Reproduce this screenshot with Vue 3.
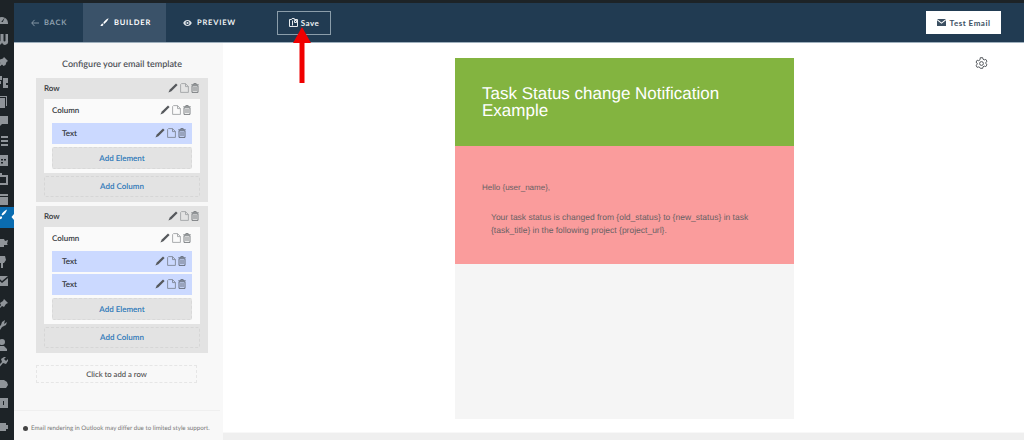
<script setup>
const icons = [
  { y: 19, d: 'M1 11a6 6 0 0 1 12 0v1H1zM6.200 10l1.600 0 2-4.500z' },
  { y: 38, d: 'M1 3h2.500v6.500a1 1 0 0 0 2 0V3h3v6.500a1 1 0 0 0 2 0V3H13v7a3 3 0 0 1-6 1.500A3 3 0 0 1 1 10z' },
  { y: 63, d: 'M9 1l4 4-1.500 1-1 3-2 1L7 8.500 3 12l-1 0 0-1 3.500-4L4 5.500l1-2 3-1z' },
  { y: 82, d: 'M3 1h4v4H3zM1 6h5v3H4v4H1zM8 3h5v5h-2v2h2v3H8z' },
  { y: 102, d: 'M3 1h9v10h-1V2H3zM1 3h9v10H1z' },
  { y: 121, d: 'M1 2h12v8H7l-3 3v-3H1z' },
  { y: 141, d: 'M1 2h3v2H1zM6 2h7v2H6zM1 6h3v2H1zM6 6h7v2H6zM1 10h3v2H1zM6 10h7v2H6z' },
  { y: 160, d: 'M1 2h12v11H1zM3 6v1.500h2V6zM6 6v1.500h2V6zM9 6v1.500h2V6zM3 9v1.500h2V9zM6 9v1.500h2V9z' },
  { y: 179, d: 'M1 1h6v2h6v10H1zM3 5v6h8V5z' },
  { y: 199, d: 'M1 2h12v2H1zM1 5h12v8H1z' },
  { y: 242, d: 'M1 7l2-3h6l1 2 3-1-1 4 1 1H9v2H3v-2H1z' },
  { y: 262, d: 'M4 1h6l1 4-2 3H8v5H6V8H5L3 5z' },
  { y: 281, d: 'M1 2h12L7 7zM1 4l6 5 6-5v8H1z' },
  { y: 305, d: 'M9 1l4 4-2 1-2 3-2-1-5 5 4-6-1-2 3-2z' },
  { y: 326, d: 'M1 11l5-5 1-3 3-2-1 4 3-2-1 3-4 2-2 3z' },
  { y: 345, d: 'M7 1a3 3 0 1 1 0 6 3 3 0 0 1 0-6zM2 13v-2l3-3h4l3 3v2z' },
  { y: 363, d: 'M1 12l6-6-1-3 3-2 2 0-2 2 2 2 2-2 0 2-2 3-3-1-5 6z' },
  { y: 384, d: 'M1 5l3-2h5l3 2 1 3-2 3H4L1 9z' },
  { y: 403, d: 'M1 2h12v10H1zM4 5v4h1V5zM8 5v4h1V5z' },
  { y: 427, d: 'M3 3h8v8H3zM1 5h2v4H1zM11 5h2v4h-2z' }
]
const actions = [
  { w: 10, h: 10, d: 'M8 .4L9.600 2 3.400 8.200 .4 9.600 1.800 6.600z', cls: 'pen' },
  { w: 9, h: 10, d: 'M1.500 .6h4l2.900 2.900v5.900H.6V1.500zM5.500 .6v3h2.900', cls: 'doc' },
  { w: 8, h: 10, d: 'M.3 1.800h7.400M2.800 1.800V.6h2.400v1.200M1 2.800h6v6.600H1zM3 4v4M5 4v4', cls: 'bin' }
]
const rows = [
  { id: 1, columns: [{ id: 1, elements: ['Text'] }] },
  { id: 2, columns: [{ id: 1, elements: ['Text', 'Text'] }] }
]
</script>

<template>
  <div class="page">
    <aside class="wp">
      <svg class="wp-icons" width="14" height="440" viewBox="0 0 14 440">
        <rect x="0" y="207" width="14" height="21" fill="#0a6cb0" />
        <path d="M14 214l-2.500 3 2.500 3z" fill="#fff" />
        <path d="M7 209.500c-2.500 1-4.500 3-5.500 5l1 1c2-1 3.800-3.300 4.500-6zM1 216c-.8.400-1 2-2 3 1.500.5 3 0 3.200-1.700z" fill="#fff" />
        <path v-for="i in icons" :key="i.y" :d="i.d" :transform="`translate(-5 ${i.y - 7})`" fill="#8f9499" fill-rule="evenodd" />
      </svg>
    </aside>
    <div class="main">
      <div class="blackbar"></div>
      <header class="topbar">
        <div class="tab back">
          <svg width="8" height="8" viewBox="0 0 9 8"><path d="M4 .5L.8 4 4 7.500M1 4h8" fill="none" stroke="#8fa0ae" stroke-width="1" /></svg>
          <span>BACK</span>
        </div>
        <div class="tab builder">
          <svg width="9" height="9" viewBox="0 0 10 10"><path d="M9.600.4C7 1.500 4.800 3.400 3.600 5.600l1 1C6.700 5.300 8.600 3 9.600.4zM2.900 6.200C1.700 6.400 1.500 7.600.4 8.800c1.600.4 3.200-.2 3.400-1.700z" fill="#fff" /></svg>
          <span>BUILDER</span>
        </div>
        <div class="tab preview">
          <svg width="9" height="6" viewBox="0 0 10 7"><path d="M5 0C2.800 0 1 1.400 0 3.500 1 5.600 2.800 7 5 7s4-1.400 5-3.500C9 1.400 7.200 0 5 0zm0 5.800a2.300 2.300 0 1 1 0-4.600 2.300 2.300 0 0 1 0 4.600zM5 2.200a1.300 1.300 0 1 0 0 2.600 1.300 1.300 0 0 0 0-2.600z" fill="#dfe4e9" /></svg>
          <span>PREVIEW</span>
        </div>
        <button class="save">
          <svg width="9" height="9" viewBox="0 0 9 9"><path d="M.5 1.500h2l.6-1h2.200v1h3.200v7H.5zM3.500 2.500v5M5.500 2.500h2v2h-2z" fill="none" stroke="#e8ecef" stroke-width="1" /></svg>
          <span>Save</span>
        </button>
        <button class="test">
          <svg width="9" height="7" viewBox="0 0 9 7"><path d="M0 0h9L4.500 3.600zM0 1.200v5.800h9V1.200L4.500 4.800z" fill="#3c5062" /></svg>
          <span>Test Email</span>
        </button>
      </header>
      <div class="body">
        <section class="panel">
          <h2>Configure your email template</h2>
          <div class="rows">
            <div v-for="row in rows" :key="row.id" class="row">
              <div class="line row-head">
                <span>Row</span>
                <span class="acts">
                  <svg v-for="a in actions" :key="a.cls" :width="a.w" :height="a.h" :viewBox="`0 0 ${a.w} ${a.h}`"><path :d="a.d" :class="a.cls" /></svg>
                </span>
              </div>
              <div v-for="col in row.columns" :key="col.id" class="col">
                <div class="line col-head">
                  <span>Column</span>
                  <span class="acts">
                    <svg v-for="a in actions" :key="a.cls" :width="a.w" :height="a.h" :viewBox="`0 0 ${a.w} ${a.h}`"><path :d="a.d" :class="a.cls" /></svg>
                  </span>
                </div>
                <div v-for="(el, i) in col.elements" :key="i" class="element">
                  <span>{{ el }}</span>
                  <span class="acts">
                    <svg v-for="a in actions" :key="a.cls" :width="a.w" :height="a.h" :viewBox="`0 0 ${a.w} ${a.h}`"><path :d="a.d" :class="a.cls" /></svg>
                  </span>
                </div>
                <div class="add-el">Add Element</div>
              </div>
              <div class="add-col">Add Column</div>
            </div>
          </div>
          <div class="add-row">Click to add a row</div>
          <div class="spacer"></div>
          <div class="note"><i class="dot"></i>Email rendering in Outlook may differ due to limited style support.</div>
        </section>
        <section class="canvas">
          <div class="sheet">
            <div class="hero">Task Status change Notification Example</div>
            <div class="pink">
              <p class="hello">Hello {user_name},</p>
              <p class="msg">Your task status is changed from {old_status} to {new_status} in task {task_title} in the following project {project_url}.</p>
            </div>
          </div>
          <svg class="gear" width="13" height="13" viewBox="0 0 13 13"><path d="M5.300.7h2.400l.3 1.500 1.300.7 1.500-.5 1.200 2-1.200 1 0 1.200 1.200 1-1.200 2-1.500-.5-1.300.7-.3 1.500H5.300L5 10.600l-1.300-.7-1.500.5-1.200-2 1.200-1V6.200l-1.200-1 1.200-2 1.500.5L5 2.800z" fill="none" stroke="#55595e" stroke-width="1" /><circle cx="6.500" cy="6.500" r="1.900" fill="none" stroke="#55595e" stroke-width="1" /></svg>
          <div class="scrollbar"></div>
        </section>
      </div>
    </div>
    <svg class="arrow" width="18" height="57" viewBox="0 0 18 57"><path d="M9 0L18 16H11.500V56H6.500V16H0z" fill="#f00000" /></svg>
  </div>
</template>

<style>
html, body { margin: 0; background: #fff; }
</style>

<style scoped>
.page { position: relative; width: 1024px; height: 440px; overflow: hidden; display: flex; font-family: Lato, "Open Sans", sans-serif; text-rendering: geometricPrecision; }
.wp { width: 14px; flex: none; background: #1d2327; }
.wp-icons { display: block; }
.main { flex: 1; display: flex; flex-direction: column; min-width: 0; }
.blackbar { height: 3px; background: #1d2327; }
.topbar { height: 39px; background: #213b52; border-bottom: 1px solid #9fb0bd; display: flex; align-items: center; }
.tab { display: flex; align-items: center; justify-content: center; gap: 5px; height: 100%; font-size: 7.5px; font-weight: 700; letter-spacing: .8px; box-sizing: border-box; }
.back { width: 69px; color: #8fa0ae; padding-left: 1px; }
.builder { width: 83px; background: #3a5269; color: #fff; padding-left: 2px; }
.preview { width: 83px; color: #eef1f3; padding-left: 4px; }
.save { margin-left: 28px; width: 54px; height: 24px; background: transparent; border: 1px solid #8b9daa; color: #eef1f3; display: flex; align-items: center; justify-content: center; gap: 3px; font: 700 8px Lato, sans-serif; letter-spacing: .5px; padding: 0; }
.test { margin-left: auto; margin-right: 23px; width: 75px; height: 23px; background: #fff; border: 0; color: #3c5062; display: flex; align-items: center; justify-content: center; gap: 4px; font: 700 8px Lato, sans-serif; letter-spacing: .5px; padding: 0; }
.body { flex: 1; display: flex; min-height: 0; }
.panel { width: 209px; flex: none; background: #f8f8f8; display: flex; flex-direction: column; padding-left: 22px; box-sizing: border-box; }
h2 { margin: 14px 0 8px; width: 172px; text-align: center; font-size: 9px; line-height: 13px; font-weight: 600; color: #4d5057; }
.rows { display: flex; flex-direction: column; gap: 4px; width: 172px; }
.row { background: #e3e3e3; padding: 0 8px 5px; box-sizing: border-box; }
.line, .element { display: flex; align-items: center; justify-content: space-between; font-size: 8px; font-weight: 600; color: #33363a; box-sizing: border-box; }
.row-head { height: 21px; margin-right: 1px; padding-bottom: 2px; }
.col { background: #fafafa; padding: 0 8px 4px; margin-bottom: 3px; }
.col-head { height: 24px; margin-right: 1px; padding-bottom: 3px; }
.element { background: #cbd9ff; height: 21px; margin-bottom: 2px; padding: 0 6px 2px 10px; }
.acts { display: flex; gap: 2px; align-items: center; }
.pen { fill: #55585c; }
.doc { fill: none; stroke: #a2a4a6; stroke-width: .9; }
.bin { fill: none; stroke: #7d8083; stroke-width: 1; }
.element .doc { stroke: #7f8796; }
.element .bin { stroke: #666e7c; }
.add-el { height: 22px; margin-top: 3px; background: #e3e3e3; border: 1px dashed #d9d9d9; box-sizing: border-box; border-radius: 2px; display: flex; align-items: center; justify-content: center; font-size: 8px; font-weight: 600; color: #2c77b8; }
.add-col { height: 21px; padding-bottom: 2px; border: 1px dashed #d6d6d6; box-sizing: border-box; border-radius: 2px; display: flex; align-items: center; justify-content: center; font-size: 8px; font-weight: 600; color: #2c77b8; }
.add-row { width: 161px; height: 18px; margin-top: 12px; border: 1px dashed #e6e6e6; box-sizing: border-box; display: flex; align-items: center; justify-content: center; font-size: 7.7px; font-weight: 500; color: #4a4a4a; }
.spacer { flex: 1; }
.note { height: 30px; margin-left: -22px; margin-right: 3px; border-top: 1px solid #efefef; display: flex; align-items: center; padding: 6px 0 0 9px; font-size: 6.2px; color: #777; white-space: nowrap; box-sizing: border-box; }
.dot { width: 5px; height: 5px; border-radius: 50%; background: #444; margin-right: 3px; flex: none; }
.canvas { flex: 1; position: relative; background: #fff; display: flex; justify-content: center; padding: 15px 0 21px; box-sizing: border-box; }
.sheet { width: 339px; background: #f5f5f5; margin-left: 2px; font-family: "Liberation Sans", Arial, sans-serif; }
.hero { background: #83b440; height: 88px; box-sizing: border-box; padding: 27px 60px 0 27px; color: #fff; font-size: 17px; line-height: 17px; }
.pink { background: #fa9c9c; height: 118px; box-sizing: border-box; padding: 35px 40px 0 27px; color: #686164; font-size: 8px; }
.hello { margin: 0; line-height: 13px; }
.msg { margin: 17px 0 0 9px; line-height: 13px; font-size: 8.5px; }
.gear { position: absolute; right: 36px; top: 14px; }
.scrollbar { position: absolute; left: 0; right: 0; bottom: 0; height: 8px; background: #efefef; border-top: 1px solid #f8f8f8; box-sizing: border-box; }
.arrow { position: absolute; left: 293px; top: 27px; }
</style>
